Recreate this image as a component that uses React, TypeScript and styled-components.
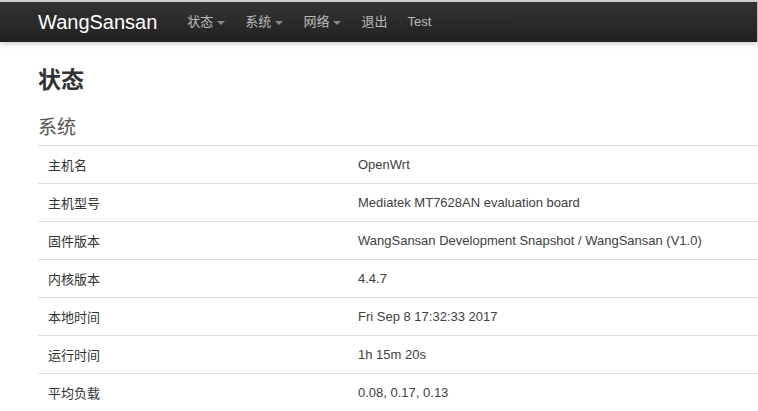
import { FC } from "react";
import styled, { createGlobalStyle } from "styled-components";

const GlobalStyle = createGlobalStyle`
  html, body {
    margin: 0;
    padding: 0;
    background: #fff;
    overflow: hidden;
  }
  body {
    font-family: "Liberation Sans", "Noto Sans CJK SC", Arial, sans-serif;
    font-size: 13px;
    color: #404040;
  }
`;

const NavBar = styled.div`
  height: 40px;
  border-top: 2px solid #cfcfcf;
  border-right: 1px solid #bbb;
  background-image: linear-gradient(to bottom, #333333, #222222);
  box-shadow: 0 1px 6px rgba(0, 0, 0, 0.25);
  display: flex;
  align-items: center;
  padding-left: 38px;
  position: relative;
  z-index: 1;
`;

const Brand = styled.a`
  color: #fff;
  font-family: "Liberation Sans", Arial, sans-serif;
  font-size: 20px;
  margin-right: 20px;
  text-decoration: none;
  line-height: 40px;
`;

const Menu = styled.ul`
  display: flex;
  list-style: none;
  margin: 0;
  padding: 0;
`;

const MenuItem = styled.li`
  padding: 0 10px;
  line-height: 40px;
  color: #bbbbbb;
  font-size: 13px;
  font-family: "Liberation Sans", "Noto Sans CJK SC", sans-serif;
  display: flex;
  align-items: center;
`;

const Caret = styled.span`
  display: inline-block;
  width: 0;
  height: 0;
  margin-left: 4px;
  margin-top: 2px;
  border-top: 4px solid #888;
  border-left: 4px solid transparent;
  border-right: 4px solid transparent;
`;

const Main = styled.div`
  padding: 0 0 0 38px;
`;

const Title = styled.h2`
  margin: 0;
  padding-top: 22px;
  font-family: "Noto Sans CJK SC", serif;
  font-size: 23px;
  font-weight: bold;
  color: #333;
  line-height: 28px;
`;

const SectionTitle = styled.h3`
  margin: 0;
  padding-top: 20px;
  padding-bottom: 5px;
  font-family: "Noto Sans CJK SC", sans-serif;
  font-size: 19px;
  font-weight: normal;
  color: #555;
  line-height: 28px;
`;

const Table = styled.table`
  width: 100%;
  table-layout: fixed;
  border-collapse: collapse;
`;

const Row = styled.tr`
  border-top: 1px solid #dddddd;
`;

const Label = styled.td`
  width: 290px;
  padding: 0 10px;
  height: 37px;
  font-family: "Noto Sans CJK SC", sans-serif;
  font-size: 13px;
  color: #333;
`;

const Value = styled.td`
  padding: 0 10px;
  height: 37px;
  font-family: "Liberation Sans", sans-serif;
  font-size: 13px;
  color: #404040;
  white-space: nowrap;
`;

const rows: [string, string][] = [
  ["主机名", "OpenWrt"],
  ["主机型号", "Mediatek MT7628AN evaluation board"],
  ["固件版本", "WangSansan Development Snapshot / WangSansan (V1.0)"],
  ["内核版本", "4.4.7"],
  ["本地时间", "Fri Sep 8 17:32:33 2017"],
  ["运行时间", "1h 15m 20s"],
  ["平均负载", "0.08, 0.17, 0.13"],
];

const App: FC = () => (
  <>
    <GlobalStyle />
    <NavBar>
      <Brand>WangSansan</Brand>
      <Menu>
        <MenuItem>
          状态<Caret />
        </MenuItem>
        <MenuItem>
          系统<Caret />
        </MenuItem>
        <MenuItem>
          网络<Caret />
        </MenuItem>
        <MenuItem>退出</MenuItem>
        <MenuItem>Test</MenuItem>
      </Menu>
    </NavBar>
    <Main>
      <Title>状态</Title>
      <SectionTitle>系统</SectionTitle>
      <Table>
        <tbody>
          {rows.map(([k, v]) => (
            <Row key={k}>
              <Label>{k}</Label>
              <Value>{v}</Value>
            </Row>
          ))}
        </tbody>
      </Table>
    </Main>
  </>
);

export default App;
